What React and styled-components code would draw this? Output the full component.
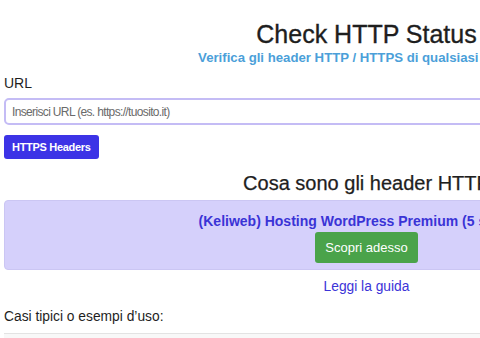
import React, { useState } from "react";
import styled, { createGlobalStyle } from "styled-components";

const GlobalStyle = createGlobalStyle`
  html, body {
    margin: 0;
    padding: 0;
    overflow: hidden;
    background: #fff;
  }
  body {
    font-family: "Liberation Sans", Arial, Helvetica, sans-serif;
    color: #212529;
  }
`;

const Page = styled.div`
  width: 725px;
  padding-left: 4px;
`;

const Title = styled.h1`
  margin: 19px 0 0;
  font-size: 25px;
  line-height: 30px;
  font-weight: 500;
  text-align: center;
  color: #1e1e1e;
  -webkit-text-stroke: 0.35px #1e1e1e;
`;

const Subtitle = styled.p`
  margin: 0;
  font-size: 13.2px;
  line-height: 17px;
  font-weight: 700;
  text-align: center;
  color: #4b9fd9;
`;

const Label = styled.label`
  display: block;
  margin-top: 8px;
  font-size: 14px;
  line-height: 19px;
  color: #1e1e1e;
`;

const UrlInput = styled.input`
  display: block;
  box-sizing: border-box;
  width: 100%;
  height: 27px;
  margin-top: 5px;
  padding: 0 6px;
  border: 2px solid #c4bcf5;
  border-radius: 5px;
  outline: none;
  font-family: inherit;
  font-size: 12px;
  letter-spacing: -0.65px;
  color: #333;

  &::placeholder {
    color: #6a6a6a;
  }
`;

const Button = styled.button`
  display: inline-block;
  box-sizing: border-box;
  height: ${({ $h }) => $h}px;
  padding: 0 ${({ $px }) => $px}px;
  border: none;
  border-radius: 3px;
  background: ${({ $bg }) => $bg};
  color: #fff;
  font-family: inherit;
  font-size: ${({ $fs }) => $fs}px;
  font-weight: ${({ $bold }) => ($bold ? 700 : 400)};
  letter-spacing: ${({ $ls }) => $ls || 0}px;
  cursor: pointer;
`;

const SubmitRow = styled.div`
  margin-top: 10px;
`;

const SectionTitle = styled.h2`
  margin: 11px 0 0;
  font-size: 20px;
  line-height: 26px;
  font-weight: 500;
  text-align: center;
  color: #1e1e1e;
  -webkit-text-stroke: 0.25px #1e1e1e;
`;

const Promo = styled.div`
  box-sizing: border-box;
  height: 70px;
  margin-top: 4px;
  padding-top: 11px;
  border: 1px solid #cbc6f3;
  border-radius: 4px;
  background: #d5d0fb;
  text-align: center;
`;

const PromoLink = styled.a`
  display: block;
  font-size: 14px;
  line-height: 18px;
  font-weight: 700;
  color: #3a33d6;
  text-decoration: none;
`;

const PromoAction = styled.div`
  margin-top: 2px;
`;

const GuideLink = styled.a`
  display: block;
  margin-top: 8px;
  font-size: 13.8px;
  line-height: 18px;
  text-align: center;
  color: #3c34d8;
  text-decoration: none;
`;

const Text = styled.p`
  margin: 12px 0 0;
  font-size: 13.8px;
  line-height: 18px;
  color: #1e1e1e;
`;

const Table = styled.div`
  margin-top: 7px;
  height: 40px;
  border-top: 1px solid #e3e3e3;
  background: #f8f8f8;
`;

export default function App() {
  const [url, setUrl] = useState("");

  return (
    <>
      <GlobalStyle />
      <Page>
        <Title>Check HTTP Status</Title>
        <Subtitle>Verifica gli header HTTP / HTTPS di qualsiasi sito web</Subtitle>

        <Label htmlFor="url">URL</Label>
        <UrlInput
          id="url"
          type="text"
          placeholder="Inserisci URL (es. https://tuosito.it)"
          value={url}
          onChange={(e) => setUrl(e.target.value)}
        />
        <SubmitRow>
          <Button $h={24} $px={8} $fs={11} $ls={-0.3} $bg="#3c33e6" $bold>
            HTTPS Headers
          </Button>
        </SubmitRow>

        <SectionTitle>Cosa sono gli header HTTP</SectionTitle>

        <Promo>
          <PromoLink href="#">(Keliweb) Hosting WordPress Premium (5 siti web)</PromoLink>
          <PromoAction>
            <Button $h={31} $px={10} $fs={13} $bg="#4aa34a">
              Scopri adesso
            </Button>
          </PromoAction>
        </Promo>

        <GuideLink href="#">Leggi la guida</GuideLink>

        <Text>Casi tipici o esempi d’uso:</Text>
        <Table />
      </Page>
    </>
  );
}
